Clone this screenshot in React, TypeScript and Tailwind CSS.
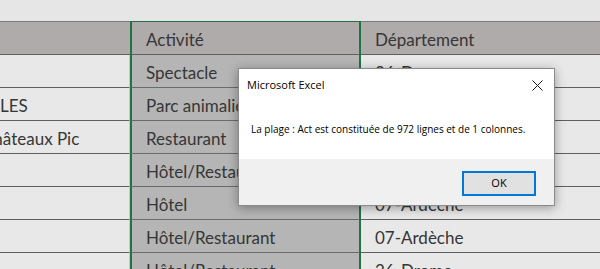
import React from "react";

const cellFont = { fontFamily: "Lato, 'Noto Sans', sans-serif" };

type Row = { a?: React.ReactNode; b: string; c?: string };

const rows: Row[] = [
  { b: "Spectacle", c: "26-Drome" },
  { a: <span className="ml-[0px]">LES</span>, b: "Parc animalier", c: "07-Ardèche" },
  { a: <span className="ml-[-18px]">Châteaux Pic</span>, b: "Restaurant", c: "26-Drome" },
  { b: "Hôtel/Restaurant", c: "07-Ardèche" },
  { b: "Hôtel", c: "07-Ardèche" },
  { b: "Hôtel/Restaurant", c: "07-Ardèche" },
  { b: "Hôtel/Restaurant", c: "26-Drome" },
];

function CloseIcon() {
  return (
    <svg width="11" height="11" viewBox="0 0 11 11">
      <path d="M0.5 0.5 L10.5 10.5 M10.5 0.5 L0.5 10.5" stroke="#1a1a1a" strokeWidth="1" />
    </svg>
  );
}

export default function App() {
  return (
    <div className="relative w-[600px] h-[269px] overflow-hidden bg-[#e6e6e6] text-[#363636]" style={cellFont}>
      <div className="h-[21px]" />
      {/* header row */}
      <div className="grid grid-cols-[130px_231px_1fr] h-[34px] text-[17px]">
        <div className="border-t border-[#7b7b7b] border-b border-b-[#5f5f5f] bg-[#afabaa]" />
        <div className="border-t border-[#217346] border-x-2 border-x-[#217346] border-b border-b-[#5f5f5f] bg-[#afabaa] flex items-end pb-[2px] pl-[14px]">
          Activité
        </div>
        <div className="border-t border-[#7b7b7b] border-b border-b-[#5f5f5f] bg-[#afabaa] flex items-end pb-[2px] pl-[14px]">
          Département
        </div>
      </div>
      {rows.map((r, i) => (
        <div key={i} className="grid grid-cols-[130px_231px_1fr] h-[33px] text-[17px]">
          <div className="border-b border-[#5f5f5f] border-r border-r-[#c8c8c8] bg-[#e8e8e8] flex items-end pb-[2px] overflow-hidden whitespace-nowrap">
            {r.a}
          </div>
          <div className="border-b border-[#6a6a6a] border-x-2 border-x-[#217346] bg-[#b5b5b5] flex items-end pb-[2px] pl-[14px] whitespace-nowrap overflow-hidden">
            {r.b}
          </div>
          <div className="border-b border-[#5f5f5f] bg-[#e8e8e8] flex items-end pb-[2px] pl-[14px] whitespace-nowrap overflow-hidden">
            {r.c}
          </div>
        </div>
      ))}

      {/* dialog */}
      <div
        className="absolute left-[238px] top-[68px] w-[317px] h-[138px] border border-[#8a8a8a] bg-white flex flex-col shadow-[0_2px_10px_rgba(0,0,0,0.35)] text-black"
        style={{ fontFamily: "'Open Sans', 'Noto Sans', sans-serif" }}
      >
        <div className="flex items-center justify-between h-[31px] pl-[8px] pr-[11px] pt-[1px] text-[11px]">
          <span>Microsoft Excel</span>
          <CloseIcon />
        </div>
        <div className="flex-1 pl-[12px] pt-[22px] text-[10px]">
          La plage : Act est constituée de 972 lignes et de 1 colonnes.
        </div>
        <div className="h-[46px] bg-[#f0f0f0] flex items-start justify-end pt-[12px] pr-[18px]">
          <button className="w-[74px] h-[25px] border-2 border-[#0078d7] bg-[#e1e1e1] text-[11px] flex items-center justify-center">
            <span>OK</span>
          </button>
        </div>
      </div>
    </div>
  );
}
